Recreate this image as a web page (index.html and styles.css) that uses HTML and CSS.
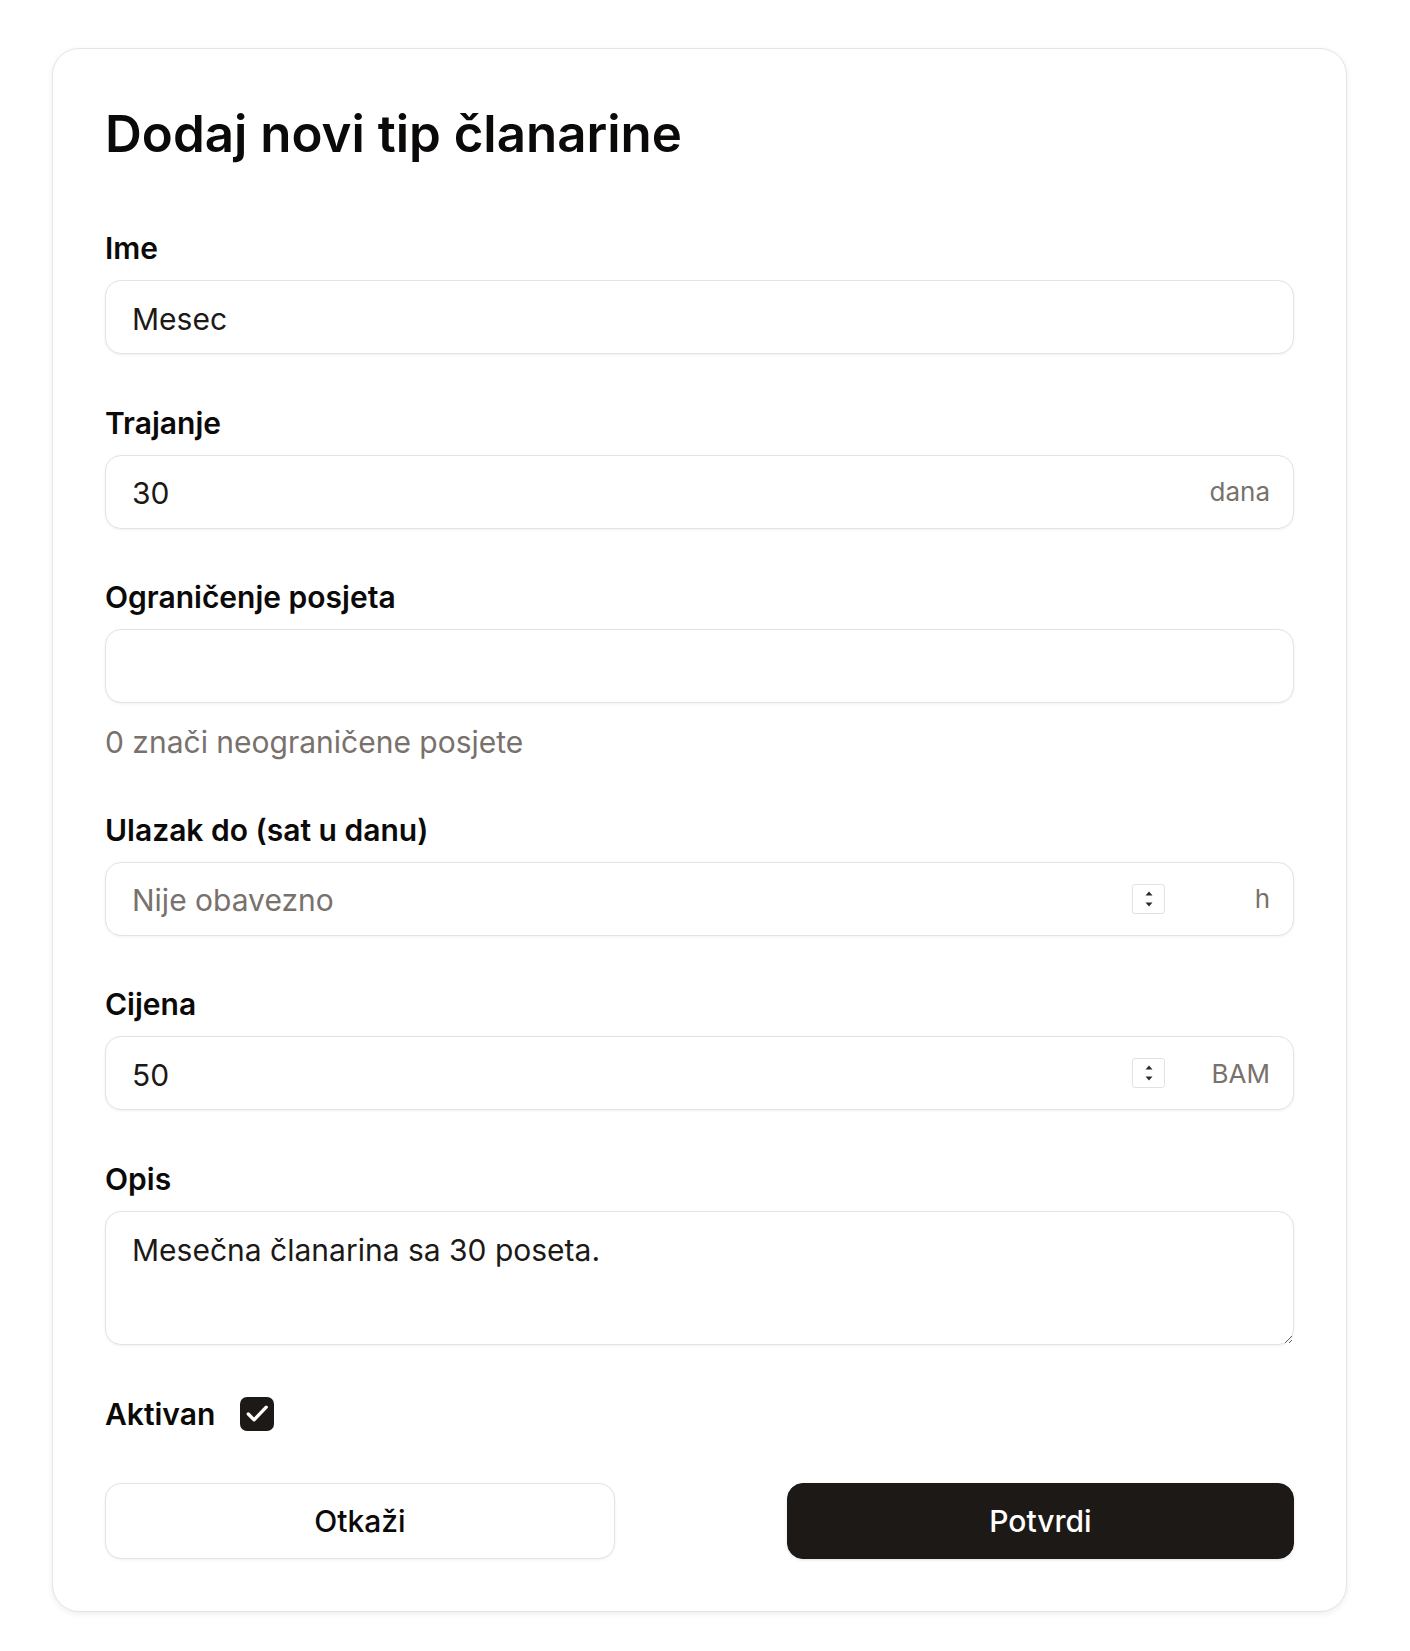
FILE: index.html
```html
<!DOCTYPE html>
<html lang="bs">
<head>
<meta charset="utf-8">
<title>Dodaj novi tip članarine</title>
<link rel="stylesheet" href="styles.css">
</head>
<body>
<div class="page">
  <form class="card">
    <h1 class="title">Dodaj novi tip članarine</h1>

    <div class="field">
      <label class="label" for="ime">Ime</label>
      <div class="control">
        <input class="input" id="ime" type="text" value="Mesec">
      </div>
    </div>

    <div class="field">
      <label class="label" for="trajanje">Trajanje</label>
      <div class="control">
        <input class="input" id="trajanje" type="text" value="30">
        <span class="suffix">dana</span>
      </div>
    </div>

    <div class="field">
      <label class="label" for="ogr">Ograničenje posjeta</label>
      <div class="control">
        <input class="input" id="ogr" type="text" value="">
      </div>
      <p class="help">0 znači neograničene posjete</p>
    </div>

    <div class="field">
      <label class="label" for="ulazak">Ulazak do (sat u danu)</label>
      <div class="control">
        <input class="input" id="ulazak" type="text" placeholder="Nije obavezno">
        <span class="spin"><svg width="10" height="20" viewBox="0 0 10 20"><path d="M1.5 6.5 L5 2.5 L8.5 6.5 Z" fill="#2b2b2b"/><path d="M1.5 13.5 L5 17.5 L8.5 13.5 Z" fill="#2b2b2b"/></svg></span>
        <span class="suffix">h</span>
      </div>
    </div>

    <div class="field">
      <label class="label" for="cijena">Cijena</label>
      <div class="control">
        <input class="input" id="cijena" type="text" value="50">
        <span class="spin"><svg width="10" height="20" viewBox="0 0 10 20"><path d="M1.5 6.5 L5 2.5 L8.5 6.5 Z" fill="#2b2b2b"/><path d="M1.5 13.5 L5 17.5 L8.5 13.5 Z" fill="#2b2b2b"/></svg></span>
        <span class="suffix">BAM</span>
      </div>
    </div>

    <div class="field">
      <label class="label" for="opis">Opis</label>
      <textarea class="textarea" id="opis">Mesečna članarina sa 30 poseta.</textarea>
    </div>

    <div class="check-row">
      <span class="check-label">Aktivan</span>
      <span class="checkbox"><svg width="34" height="34" viewBox="0 0 35 35"><path d="M8.5 17.5 L14.5 23.5 L27 10.5" fill="none" stroke="#ffffff" stroke-width="3.4" stroke-linecap="round" stroke-linejoin="round"/></svg></span>
    </div>

    <div class="actions">
      <button type="button" class="btn btn-outline">Otkaži</button>
      <button type="button" class="btn btn-dark">Potvrdi</button>
    </div>
  </form>
</div>
</body>
</html>
```

FILE: styles.css
```css
* { box-sizing: border-box; }

html, body {
  margin: 0;
  padding: 0;
  background: #ffffff;
}

body {
  font-family: Inter, "Noto Sans", "Liberation Sans", sans-serif;
  color: #1c1917;
}

.page {
  padding: 48px 0 40px 52px;
}

.card {
  width: 1295px;
  border: 1px solid #e5e4e3;
  border-radius: 27px;
  background: #ffffff;
  box-shadow: 0 2px 6px rgba(0, 0, 0, 0.07);
  padding: 52px;
  display: flex;
  flex-direction: column;
}

.title {
  margin: 0 0 62px 0;
  font-size: 51px;
  line-height: 66px;
  font-weight: 600;
  color: #0c0a09;
  letter-spacing: 0;
}

.field {
  display: flex;
  flex-direction: column;
  margin-bottom: 49.5px;
}

.label {
  font-size: 30px;
  line-height: 38px;
  font-weight: 600;
  color: #0c0a09;
  margin-bottom: 13px;
}

.control {
  display: flex;
  align-items: center;
  height: 74px;
  border: 1px solid #e4e3e2;
  border-radius: 16px;
  background: #ffffff;
  box-shadow: 0 1px 3px rgba(0, 0, 0, 0.06);
}

.input {
  flex: 1;
  min-width: 0;
  height: 100%;
  border: 0;
  outline: none;
  background: transparent;
  padding: 3px 0 0 26px;
  font-family: inherit;
  font-size: 30px;
  color: #1c1917;
  border-radius: 16px;
}

.input::placeholder {
  color: #78716c;
  opacity: 1;
}

.spin {
  width: 33px;
  height: 30px;
  border: 1px solid #e2e2e2;
  border-radius: 3px;
  display: flex;
  align-items: center;
  justify-content: center;
  background: #ffffff;
}

.suffix {
  width: 128px;
  text-align: right;
  padding-right: 23px;
  font-size: 26px;
  color: #78716c;
}

.help {
  margin: 20px 0 0 0;
  font-size: 30px;
  line-height: 38px;
  color: #78716c;
}

.textarea {
  display: block;
  width: 100%;
  height: 134px;
  border: 1px solid #e4e3e2;
  border-radius: 16px;
  box-shadow: 0 1px 3px rgba(0, 0, 0, 0.06);
  padding: 17px 26px;
  font-family: inherit;
  font-size: 30px;
  line-height: 42px;
  color: #1c1917;
  resize: vertical;
  outline: none;
}

.check-row {
  display: flex;
  align-items: center;
  gap: 25px;
  margin-top: 2px;
  margin-bottom: 52px;
  height: 35px;
}

.check-label {
  font-size: 30px;
  font-weight: 600;
  color: #0c0a09;
}

.checkbox {
  width: 34px;
  height: 34px;
  border-radius: 7px;
  background: #1c1917;
  display: block;
}

.checkbox svg { display: block; }

.actions {
  display: flex;
  justify-content: space-between;
}

.btn {
  height: 76px;
  border-radius: 16px;
  font-family: inherit;
  font-size: 30px;
  font-weight: 500;
  cursor: pointer;
}

.btn-outline {
  width: 510px;
  background: #ffffff;
  color: #0c0a09;
  border: 1px solid #e4e3e2;
  box-shadow: 0 1px 3px rgba(0, 0, 0, 0.06);
}

.btn-dark {
  width: 507px;
  background: #1c1917;
  color: #ffffff;
  border: 1px solid #1c1917;
  box-shadow: 0 1px 3px rgba(0, 0, 0, 0.12);
}
```
